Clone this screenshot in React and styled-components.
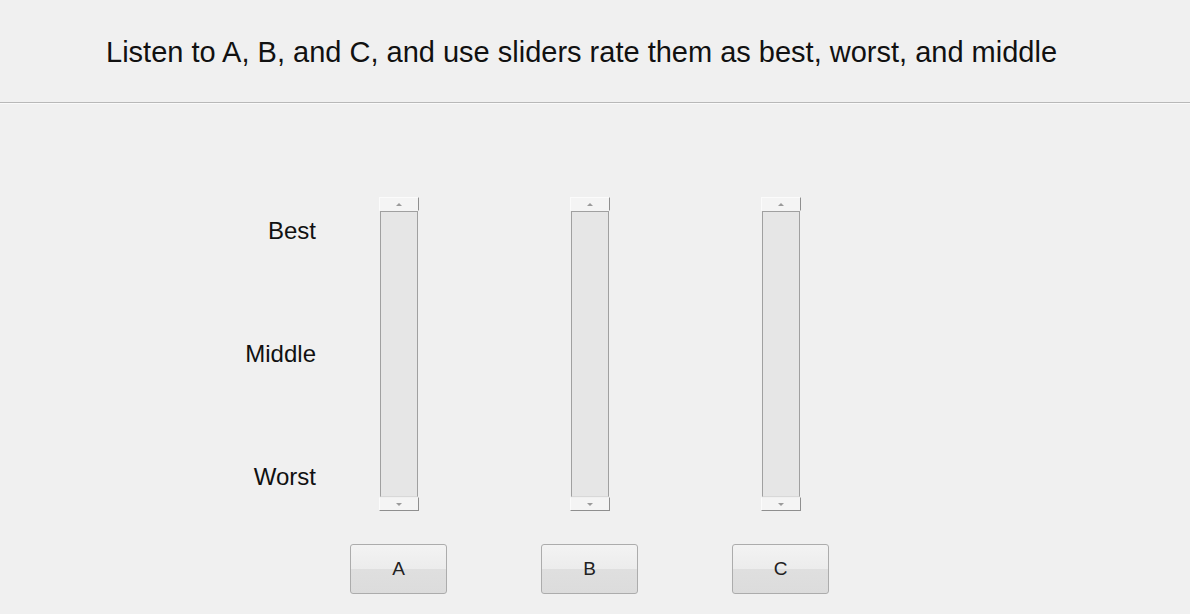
import React from 'react';
import styled, { createGlobalStyle } from 'styled-components';

const GlobalStyle = createGlobalStyle`
    html, body {
        margin: 0;
        padding: 0;
        background: #f0f0f0;
        font-family: Arial, "Liberation Sans", sans-serif;
        color: #111;
    }
`;

const items = ['A', 'B', 'C'];
const levels = ['Best', 'Middle', 'Worst'];

export default () => {
    return (
        <Page>
            <GlobalStyle />
            <Header>
                Listen to A, B, and C, and use sliders rate them as best, worst, and middle
            </Header>
            <Body>
                <Labels>
                    {levels.map(item => (
                        <Label key={item}>{item}</Label>
                    ))}
                </Labels>
                <Columns>
                    {items.map(item => (
                        <Column key={item}>
                            <Slider>
                                <Arrow $dir="up"><Tri $dir="up" /></Arrow>
                                <Track />
                                <Arrow $dir="down"><Tri $dir="down" /></Arrow>
                            </Slider>
                            <PlayButton>{item}</PlayButton>
                        </Column>
                    ))}
                </Columns>
            </Body>
        </Page>
    );
};

const Page = styled.div`
    width: 1190px;
    height: 614px;
    overflow: hidden;
`;

const Header = styled.div`
    height: 67px;
    padding: 35px 0 0 106px;
    font-size: 29px;
    line-height: 34px;
    color: #111;
    white-space: nowrap;
    border-bottom: 1px solid #b8b8b8;
    box-shadow: 0 1px 0 #fafafa;
`;

const Body = styled.div`
    display: flex;
    padding-top: 94px;
`;

const Labels = styled.div`
    width: 316px;
    height: 314px;
    box-sizing: border-box;
    padding: 20px 0;
    margin-right: 34px;
    display: flex;
    flex-direction: column;
    justify-content: space-between;
    align-items: flex-end;
`;

const Label = styled.div`
    font-size: 24px;
    line-height: 28px;
    color: #111;
`;

const Columns = styled.div`
    display: grid;
    grid-template-columns: repeat(3, 97px);
    column-gap: 94px;
`;

const Column = styled.div`
    display: flex;
    flex-direction: column;
    align-items: center;
    gap: 33px;
`;

const Slider = styled.div`
    width: 40px;
    height: 314px;
    display: flex;
    flex-direction: column;
    margin-left: 1px;
`;

const Arrow = styled.div`
    height: 14px;
    box-sizing: border-box;
    display: flex;
    align-items: center;
    justify-content: center;
    background: #f4f4f4;
    border-top: 1px solid ${p => p.$dir === 'up' ? '#fbfbfb' : '#f0f0f0'};
    border-left: 1px solid #fbfbfb;
    border-right: 1px solid #8f8f8f;
    border-bottom: 1px solid ${p => p.$dir === 'up' ? '#f4f4f4' : '#8f8f8f'};
`;

const Tri = styled.div`
    width: 0;
    height: 0;
    border-left: 3px solid transparent;
    border-right: 3px solid transparent;
    ${p => p.$dir === 'up'
        ? 'border-bottom: 3px solid #9a9a9a;'
        : 'border-top: 3px solid #9a9a9a;'}
`;

const Track = styled.div`
    flex: 1;
    margin: 0 1px 0 1px;
    background: #e6e6e6;
    border: 1px solid #a0a0a0;
    border-bottom-color: #d8d8d8;
`;

const PlayButton = styled.div`
    width: 97px;
    height: 50px;
    box-sizing: border-box;
    display: flex;
    align-items: center;
    justify-content: center;
    font-size: 19px;
    color: #222;
    border: 1px solid #acacac;
    border-radius: 3px;
    background: linear-gradient(to bottom, #f3f3f3 0%, #ececec 50%, #dfdfdf 51%, #dcdcdc 100%);
`;
